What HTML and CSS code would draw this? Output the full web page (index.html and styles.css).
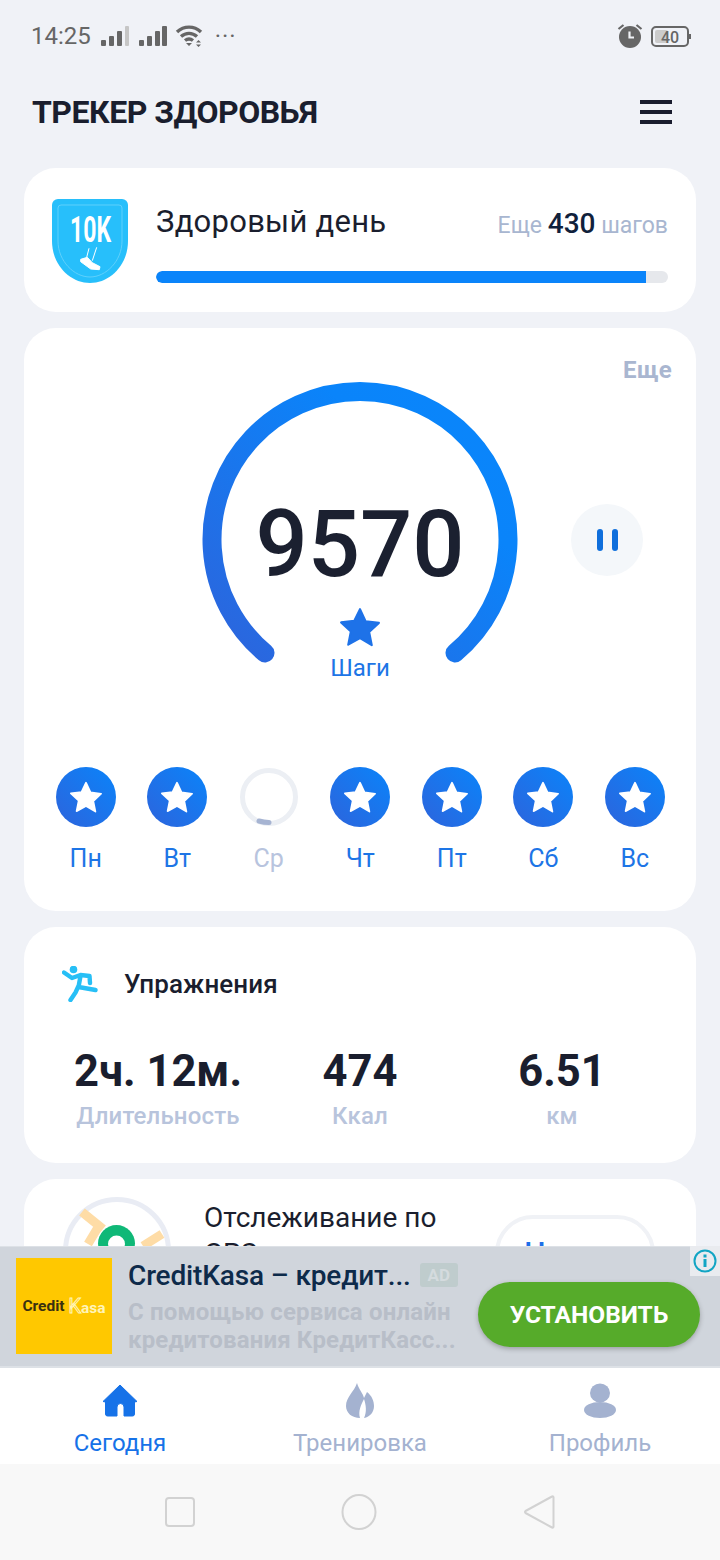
FILE: index.html
```html
<!DOCTYPE html>
<html lang="ru">
<head>
    <meta charset="UTF-8">
    <meta name="viewport" content="width=device-width, initial-scale=1.0">
    <title>Трекер здоровья</title>
    <link rel="stylesheet" href="styles.css">
</head>
<body>
    <svg class="defs" width="0" height="0">
        <defs>
            <symbol id="star" viewBox="0 0 40 38">
                <path d="M20 2l5.4 11.6 12.6 1.5-9.3 8.7 2.5 12.5L20 29.6 8.8 35.8l2.5-12.5L2 14.6l12.6-1.5z" fill="currentColor" stroke="currentColor" stroke-width="2" stroke-linejoin="round"/>
            </symbol>
            <linearGradient id="blueGrad" x1="0" y1="1" x2="1" y2="0">
                <stop offset="0" stop-color="#2d64dc"/>
                <stop offset="0.7" stop-color="#0a84fa"/>
                <stop offset="1" stop-color="#0a86fb"/>
            </linearGradient>
        </defs>
    </svg>

    <div class="screen">
        <!-- Status bar -->
        <div class="status-bar">
            <span class="status-time">14:25</span>
            <svg class="status-signal" width="30" height="22" viewBox="0 0 30 22">
                <rect x="1" y="15" width="5" height="6" rx="1" fill="#666"/>
                <rect x="9" y="11" width="5" height="10" rx="1" fill="#666"/>
                <rect x="17" y="6" width="5" height="15" rx="1" fill="#666"/>
                <rect x="25" y="1" width="4" height="20" rx="1" fill="#c6c6c6"/>
            </svg>
            <svg class="status-signal" width="30" height="22" viewBox="0 0 30 22">
                <rect x="1" y="15" width="5" height="6" rx="1" fill="#666"/>
                <rect x="9" y="11" width="5" height="10" rx="1" fill="#666"/>
                <rect x="17" y="6" width="5" height="15" rx="1" fill="#666"/>
                <rect x="24" y="1" width="5" height="20" rx="1" fill="#666"/>
            </svg>
            <svg class="status-wifi" width="30" height="24" viewBox="0 0 30 24">
                <path d="M2 8c7-6.500 17-6.500 24 0M6 12.500c4.800-4.200 11.200-4.200 16 0M10 16.500c2.500-2 5.500-2 8 0" fill="none" stroke="#666" stroke-width="3.400"/>
                <path d="M11 19h6l-3 3zM21 18.500l2.500-2.500 2.500 2.500zM21 20.500h5l-2.500 2.500z" fill="#666"/>
            </svg>
            <span class="status-dots">···</span>
            <span class="status-right">
                <svg width="26" height="26" viewBox="0 0 26 26">
                    <circle cx="13" cy="14" r="11" fill="#666"/>
                    <path d="M1.500 6l5-4M24.500 6l-5-4" stroke="#666" stroke-width="2.200" fill="none"/>
                    <path d="M12.500 8.500v6h4.500" stroke="#f0f2f6" stroke-width="2.200" fill="none"/>
                </svg>
                <span class="battery">
                    <span class="battery-fill"></span>
                    <span class="battery-num">40</span>
                </span>
            </span>
        </div>

        <header class="app-header">
            <h1>ТРЕКЕР ЗДОРОВЬЯ</h1>
            <div class="menu-icon"><span></span><span></span><span></span></div>
        </header>

        <div class="content">
            <!-- Daily goal -->
            <section class="card goal-card">
                <svg class="goal-badge" width="76" height="84" viewBox="0 0 76 84">
                    <path d="M6 0H70a6 6 0 0 1 6 6V42C76 66 58 84 38 84S0 66 0 42V6a6 6 0 0 1 6-6z" fill="#27bffb"/>
                    <path d="M9 6H67a3 3 0 0 1 3 3V42C70 62 54 78 38 78S6 62 6 42V9a3 3 0 0 1 3-3z" fill="none" stroke="#5fd0fc" stroke-width="1"/>
                    <text x="18" y="43" font-family="Roboto" font-size="36" font-weight="700" fill="#fff" textLength="41" lengthAdjust="spacingAndGlyphs">10K</text>
                    <path d="M37 49.300L34.700 58.300M44.700 48.300L40.300 61.700" stroke="#fff" stroke-width="1" fill="none"/>
                    <path d="M28.700 60.300L35.300 58.300 40.300 63.700 48 67.700 47.300 70.700 38.700 70 28.700 62.700z" fill="#fff" stroke="#fff" stroke-linejoin="round"/>
                </svg>
                <div class="goal-body">
                    <div class="goal-top">
                        <span class="goal-title">Здоровый день</span>
                        <span class="goal-left">Еще <b>430</b> шагов</span>
                    </div>
                    <div class="progress"><div class="progress-fill" style="width: 95.7%"></div></div>
                </div>
            </section>

            <!-- Steps -->
            <section class="card steps-card">
                <div class="more">Еще</div>
                <div class="gauge-row">
                    <div></div>
                    <div class="gauge">
                        <svg width="320" height="310" viewBox="0 0 320 310">
                            <path d="M65 273A148 148 0 1 1 255 273" fill="none" stroke="url(#blueGrad)" stroke-width="19" stroke-linecap="round"/>
                        </svg>
                        <div class="gauge-center">
                            <div class="steps-num">9570</div>
                            <svg class="steps-star" width="42" height="40"><use href="#star"/></svg>
                            <div class="steps-label">Шаги</div>
                        </div>
                    </div>
                    <div class="pause-btn">
                        <span></span><span></span>
                    </div>
                </div>

                <div class="days">
                    <div class="day">
                        <div class="day-circle"><svg width="34" height="32"><use href="#star"/></svg></div>
                        <div class="day-name">Пн</div>
                    </div>
                    <div class="day">
                        <div class="day-circle"><svg width="34" height="32"><use href="#star"/></svg></div>
                        <div class="day-name">Вт</div>
                    </div>
                    <div class="day day-today">
                        <svg width="60" height="60" viewBox="0 0 60 60">
                            <circle cx="30" cy="30" r="26.500" fill="none" stroke="#eceff4" stroke-width="5"/>
                            <path d="M20 54.500q5 1.500 10 1.500" transform="translate(0 -.5)" fill="none" stroke="#a6b4d2" stroke-width="5" stroke-linecap="round"/>
                        </svg>
                        <div class="day-name">Ср</div>
                    </div>
                    <div class="day">
                        <div class="day-circle"><svg width="34" height="32"><use href="#star"/></svg></div>
                        <div class="day-name">Чт</div>
                    </div>
                    <div class="day">
                        <div class="day-circle"><svg width="34" height="32"><use href="#star"/></svg></div>
                        <div class="day-name">Пт</div>
                    </div>
                    <div class="day">
                        <div class="day-circle"><svg width="34" height="32"><use href="#star"/></svg></div>
                        <div class="day-name">Сб</div>
                    </div>
                    <div class="day">
                        <div class="day-circle"><svg width="34" height="32"><use href="#star"/></svg></div>
                        <div class="day-name">Вс</div>
                    </div>
                </div>
            </section>

            <!-- Exercise -->
            <section class="card exercise-card">
                <div class="exercise-head">
                    <svg width="36" height="36" viewBox="0 0 36 36">
                        <circle cx="11.500" cy="3.500" r="3.800" fill="#27bff6"/>
                        <path d="M2 6.500l8 5.500 8.500-3 9 1 .5 7M18.500 10l-2 11 17 3M16.500 20l-3 6.500-5 7.500" fill="none" stroke="#27bff6" stroke-width="4.400" stroke-linecap="round" stroke-linejoin="round"/>
                    </svg>
                    <span>Упражнения</span>
                </div>
                <div class="stats">
                    <div class="stat">
                        <div class="stat-value">2ч. 12м.</div>
                        <div class="stat-label">Длительность</div>
                    </div>
                    <div class="stat">
                        <div class="stat-value">474</div>
                        <div class="stat-label">Ккал</div>
                    </div>
                    <div class="stat">
                        <div class="stat-value">6.51</div>
                        <div class="stat-label">км</div>
                    </div>
                </div>
            </section>

            <!-- GPS -->
            <section class="card gps-card">
                <svg class="gps-map" width="108" height="108" viewBox="0 0 108 108">
                    <circle cx="54" cy="54" r="51.500" fill="#fff" stroke="#e9ecf4" stroke-width="5"/>
                    <path d="M19 15l21 17M34 32l-9 15M99 37L80 49" fill="none" stroke="#fedca6" stroke-width="9"/>
                    <path d="M53.500 74C41 62 35 54 35 46.500a18.500 18.500 0 0 1 37 0c0 7.500-6 15.500-18.500 27.500z" fill="#0fb877"/>
                    <circle cx="53.500" cy="47" r="8.500" fill="#fff"/>
                </svg>
                <div class="gps-title">Отслеживание по GPS</div>
                <div class="gps-btn">Начать</div>
            </section>
        </div>

        <!-- Ad banner -->
        <div class="ad">
            <div class="ad-logo">
                <span class="ad-logo-dark">Credit</span>
                <span class="ad-logo-light"><span class="ad-logo-k">K</span>asa</span>
            </div>
            <div class="ad-text">
                <div class="ad-title-row">
                    <span class="ad-title">CreditKasa – кредит...</span>
                    <span class="ad-tag">AD</span>
                </div>
                <div class="ad-desc">С помощью сервиса онлайн<br>кредитования КредитКасс...</div>
            </div>
            <div class="ad-btn">УСТАНОВИТЬ</div>
            <div class="ad-info">
                <svg width="24" height="24" viewBox="0 0 24 24">
                    <circle cx="12" cy="12" r="10.500" fill="none" stroke="#12a5c4" stroke-width="2"/>
                    <rect x="10.500" y="10" width="3" height="8" fill="#12a5c4"/>
                    <rect x="10.500" y="5.500" width="3" height="3" fill="#12a5c4"/>
                </svg>
            </div>
        </div>

        <!-- Bottom tabs -->
        <nav class="tabs">
            <div class="tab tab-active">
                <svg width="36" height="36" viewBox="0 -1 36 36">
                    <path d="M18 1L35 17.500l-2.500.5V30a2 2 0 0 1-2 2H22V23a3.500 3.500 0 0 0-7 0v9H5.500a2 2 0 0 1-2-2V18L1 17.500z" fill="currentColor" stroke="currentColor" stroke-linejoin="round"/>
                </svg>
                <span>Сегодня</span>
            </div>
            <div class="tab">
                <svg width="36" height="36" viewBox="0 0 36 36">
                    <path d="M15 0C17 7 21 10 22 15C23 13 24 11 25 9C30 13 32 18 32 23C32 29 28 34 22 35C25 29 24 22 22 16C19 22 16 28 18 35C10 35 4 30 4 23C4 14 12 9 15 0Z" fill="currentColor"/>
                </svg>
                <span>Тренировка</span>
            </div>
            <div class="tab">
                <svg width="36" height="36" viewBox="0 0 36 36">
                    <ellipse cx="18" cy="10" rx="10" ry="9.500" fill="currentColor"/>
                    <ellipse cx="18" cy="27" rx="16" ry="8" fill="currentColor"/>
                </svg>
                <span>Профиль</span>
            </div>
        </nav>

        <!-- System nav -->
        <div class="sys-nav">
            <svg width="30" height="30" viewBox="0 0 30 30">
                <rect x="1" y="1" width="28" height="28" rx="3" fill="none" stroke="#d2d2d2" stroke-width="2"/>
            </svg>
            <svg width="36" height="36" viewBox="0 0 36 36">
                <ellipse cx="18" cy="18" rx="16.500" ry="17" fill="none" stroke="#d2d2d2" stroke-width="2"/>
            </svg>
            <svg width="32" height="36" viewBox="0 0 32 36">
                <path d="M29 2.500c.6-.4 1.500 0 1.500.8v29.400c0 .8-.9 1.200-1.500.8L2.500 19c-.7-.5-.7-1.500 0-2z" fill="none" stroke="#d2d2d2" stroke-width="2" stroke-linejoin="round"/>
            </svg>
        </div>
    </div>
</body>
</html>
```

FILE: styles.css
```css
* {
    box-sizing: border-box;
}

body {
    font-family: Roboto, "Noto Sans", sans-serif;
    margin: 0;
    padding: 0;
    background-color: #f0f2f7;
    color: #1a1e2e;
}

.defs {
    position: absolute;
}

.screen {
    position: relative;
    width: 720px;
    height: 1560px;
    display: flex;
    flex-direction: column;
    overflow: hidden;
}

/* status bar */
.status-bar {
    height: 72px;
    flex-shrink: 0;
    padding: 0 31px;
    display: flex;
    align-items: center;
    color: #666;
}

.status-time {
    font-size: 24px;
    margin-right: 9px;
}

.status-signal {
    margin-right: 8px;
}

.status-wifi {
    margin-left: -1px;
}

.status-dots {
    font-size: 24px;
    margin-left: 10px;
    letter-spacing: 1px;
}

.status-right {
    margin-left: auto;
    display: flex;
    align-items: center;
    gap: 8px;
}

.battery {
    position: relative;
    width: 38px;
    height: 21px;
    border: 2px solid #666;
    border-radius: 5px;
    display: block;
}

.battery::after {
    content: "";
    position: absolute;
    right: -4px;
    top: 6px;
    width: 2px;
    height: 5px;
    background-color: #666;
}

.battery-fill {
    position: absolute;
    left: 2px;
    top: 2px;
    bottom: 2px;
    width: 13px;
    background-color: #cbcbcb;
    border-radius: 2px;
}

.battery-num {
    position: absolute;
    left: 8px;
    top: -1px;
    font-size: 16px;
    line-height: 21px;
    font-weight: 500;
    color: #666;
}

/* header */
.app-header {
    height: 80px;
    margin-bottom: 16px;
    flex-shrink: 0;
    padding: 0 48px 0 32px;
    display: flex;
    align-items: center;
    justify-content: space-between;
}

h1 {
    margin: 0;
    font-size: 32px;
    font-weight: 700;
    letter-spacing: -0.5px;
}

.menu-icon {
    width: 32px;
    display: flex;
    flex-direction: column;
    gap: 6px;
}

.menu-icon span {
    height: 4px;
    background-color: #1a1d2e;
}

/* cards */
.content {
    height: 1200px;
    flex-shrink: 0;
    padding: 0 24px;
    display: flex;
    flex-direction: column;
    gap: 16px;
    overflow: hidden;
}

.card {
    background-color: white;
    border-radius: 32px;
    flex-shrink: 0;
}

.goal-card {
    height: 144px;
    padding: 31px 28px 0;
    display: flex;
    gap: 28px;
}

.goal-body {
    flex: 1;
}

.goal-top {
    height: 48px;
    display: flex;
    align-items: center;
    justify-content: space-between;
}

.goal-title {
    font-size: 31px;
    letter-spacing: 0.25px;
    margin-top: -4px;
}

.goal-left {
    font-size: 23px;
    color: #a8b6d0;
}

.goal-left b {
    font-size: 28px;
    font-weight: 500;
    color: #10213c;
}

.progress {
    margin-top: 24px;
    height: 12px;
    background-color: #e6e8ec;
    border-radius: 6px;
    overflow: hidden;
}

.progress-fill {
    height: 100%;
    background-color: #0a84fa;
    border-radius: 6px 0 0 6px;
}

.steps-card {
    height: 583px;
    padding: 0 16px;
}

.more {
    height: 52px;
    padding: 28px 8px 0 0;
    line-height: 28px;
    text-align: right;
    font-size: 24px;
    font-weight: 700;
    letter-spacing: 0.3px;
    color: #a9b6d0;
}

.gauge-row {
    display: grid;
    grid-template-columns: 1fr 320px 1fr;
}

.gauge {
    position: relative;
    height: 310px;
}

.gauge-center {
    position: absolute;
    left: 0;
    right: 0;
    top: 110px;
    display: flex;
    flex-direction: column;
    align-items: center;
    color: #1e72e8;
}

.steps-num {
    font-size: 92px;
    line-height: 110px;
    font-weight: 500;
    color: #1b2030;
}

.steps-star {
    margin-top: 7px;
}

.steps-label {
    font-size: 24px;
    line-height: 28px;
    margin-top: 7px;
    color: #1d75e6;
}

.pause-btn {
    width: 72px;
    height: 72px;
    margin: 124px 0 0 51px;
    border-radius: 50%;
    background-color: #f4f7fa;
    display: flex;
    align-items: center;
    justify-content: center;
    gap: 9px;
}

.pause-btn span {
    width: 6px;
    height: 22px;
    border-radius: 3px;
    background-color: #0f6fdc;
}

.days {
    margin-top: 77px;
    display: grid;
    grid-template-columns: repeat(7, 91.5px);
}

.day {
    display: flex;
    flex-direction: column;
    align-items: center;
    color: #1d75e6;
}

.day-circle {
    width: 60px;
    height: 60px;
    border-radius: 50%;
    background: linear-gradient(45deg, #2d64dc, #0a84fa);
    color: white;
    display: flex;
    align-items: center;
    justify-content: center;
}

.day-name {
    margin-top: 18px;
    font-size: 25px;
    line-height: 28px;
}

.day-today {
    color: #b8c4de;
}

.exercise-card {
    height: 236px;
    padding: 0 33px;
}

.exercise-head {
    height: 114px;
    margin-left: 5px;
    display: flex;
    align-items: center;
    gap: 26px;
    font-size: 26px;
    font-weight: 500;
    letter-spacing: 0.1px;
}

.stats {
    margin-top: 5px;
    display: grid;
    grid-template-columns: repeat(3, 1fr);
    text-align: center;
}

.stat-value {
    font-size: 43.5px;
    line-height: 52px;
    font-weight: 700;
}

.stat-label {
    margin-top: 2px;
    font-size: 24px;
    line-height: 32px;
    font-weight: 500;
    letter-spacing: 0.15px;
    color: #b8c4dc;
}

.gps-card {
    height: 240px;
    padding: 18px 0 0 39px;
    display: flex;
    align-items: flex-start;
}

.gps-map {
    flex-shrink: 0;
}

.gps-title {
    width: 260px;
    margin: 3px 0 0 33px;
    font-size: 28px;
    line-height: 36px;
}

.gps-btn {
    width: 160px;
    height: 76px;
    margin: 18px 0 0 31px;
    flex-shrink: 0;
    border: 4px solid #f0f2f6;
    border-radius: 38px;
    font-size: 30px;
    font-weight: 500;
    line-height: 68px;
    text-align: center;
    color: #1e6fe8;
}

/* ad banner, sits over the cards */
.ad {
    position: absolute;
    left: 0;
    right: 0;
    top: 1246px;
    height: 122px;
    padding: 11px 20px 0 16px;
    display: flex;
    align-items: flex-start;
    background-color: #d0d5dc;
    border-top: 1px solid #dde1e6;
    border-bottom: 2px solid #dde1e6;
}

.ad-logo {
    width: 96px;
    height: 96px;
    flex-shrink: 0;
    background-color: #ffc800;
    display: flex;
    align-items: center;
    justify-content: center;
    gap: 4px;
    font-size: 15.5px;
    font-weight: 700;
}

.ad-logo-dark {
    color: #3a3010;
}

.ad-logo-light {
    color: #fff4b8;
}

.ad-logo-k {
    font-size: 20px;
    font-weight: 400;
    color: transparent;
    -webkit-text-stroke: 1px #fff4b8;
}

.ad-text {
    flex: 1;
    min-width: 0;
    margin-left: 16px;
}

.ad-title-row {
    display: flex;
    align-items: center;
    height: 36px;
}

.ad-title {
    font-size: 28px;
    font-weight: 500;
    letter-spacing: -0.15px;
    color: #0d2a4a;
    white-space: nowrap;
    margin-top: -2px;
}

.ad-tag {
    margin: -3px 0 0 9px;
    width: 38px;
    height: 24px;
    background-color: #bfcccd;
    border-radius: 3px;
    font-size: 17px;
    font-weight: 700;
    line-height: 24px;
    text-align: center;
    color: #d4dbde;
}

.ad-desc {
    margin-top: 4px;
    font-size: 24px;
    line-height: 28px;
    font-weight: 700;
    letter-spacing: 0.15px;
    color: #b8bec8;
    white-space: nowrap;
}

.ad-btn {
    width: 222px;
    height: 65px;
    margin-top: 24px;
    flex-shrink: 0;
    border-radius: 33px;
    background-color: #56ab2a;
    box-shadow: 0 2px 5px rgba(0, 0, 0, 0.25);
    font-size: 24.5px;
    font-weight: 700;
    line-height: 65px;
    text-align: center;
    color: white;
}

.ad-info {
    position: absolute;
    top: -1px;
    right: 0;
    width: 30px;
    height: 30px;
    background-color: #e9ebef;
    display: flex;
    align-items: center;
    justify-content: center;
}

/* bottom tabs */
.tabs {
    height: 96px;
    flex-shrink: 0;
    background-color: white;
    display: grid;
    grid-template-columns: repeat(3, 1fr);
    text-align: center;
}

.tab {
    padding-top: 15px;
    display: flex;
    flex-direction: column;
    align-items: center;
    font-size: 24px;
    line-height: 28px;
    color: #a4b2d0;
}

.tab svg {
    margin-bottom: 10px;
}

.tab-active {
    color: #1672e8;
}

.sys-nav {
    flex: 1;
    background-color: #f8f8f8;
    display: flex;
    align-items: center;
    justify-content: space-between;
    padding: 0 165px;
}
```
